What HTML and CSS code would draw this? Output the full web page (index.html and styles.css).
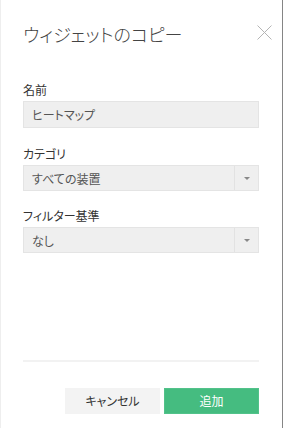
FILE: index.html
```html
<!DOCTYPE html>
<html lang="ja">
<head>
	<meta charset="UTF-8">
	<title>ウィジェットのコピー</title>
	<link rel="stylesheet" href="styles.css">
</head>
<body>
<div class="dialog">
	<div class="head">
		<div class="title">ウィジェットのコピー</div>
		<div class="close">
			<svg width="15" height="15" viewBox="0 0 15 15"><path d="M0.5 0.5 L14.5 14.5 M14.5 0.5 L0.5 14.5" stroke="#b4b4b4" stroke-width="1" fill="none"/></svg>
		</div>
	</div>

	<div class="form">
		<div class="field">
			<div class="label">名前</div>
			<div class="input">ヒートマップ</div>
		</div>
		<div class="field">
			<div class="label">カテゴリ</div>
			<div class="select">
				<span class="val">すべての装置</span>
				<span class="arrow"></span>
			</div>
		</div>
		<div class="field">
			<div class="label">フィルター基準</div>
			<div class="select">
				<span class="val">なし</span>
				<span class="arrow"></span>
			</div>
		</div>
	</div>

	<div class="line"></div>

	<div class="btns">
		<div class="btn cancel">キャンセル</div>
		<div class="btn add">追加</div>
	</div>
</div>
</body>
</html>
```

FILE: styles.css
```css
html,body{
	margin: 0;
	padding: 0;
	background-color: #fff;
	font-family: "Noto Sans CJK JP", "Noto Sans", sans-serif;
	font-feature-settings: "palt";
}
.dialog{
	box-sizing: border-box;
	width: 283px;
	height: 428px;
	padding: 22px 23px 0 22px;
	border-left: 1px solid #eee;
	border-right: 1px solid #858585;
	display: flex;
	flex-direction: column;
}
.head{
	display: flex;
	justify-content: space-between;
	align-items: flex-start;
}
.title{
	font-size: 18px;
	line-height: 24px;
	font-weight: 300;
	color: #444;
}
.close{
	width: 15px;
	height: 15px;
	margin-top: 3px;
	margin-right: -13px;
}
.close svg{display: block;}
.form{
	margin-top: 36px;
	display: flex;
	flex-direction: column;
}
.field{margin-bottom: 17px;}
.field:first-child{margin-bottom: 18px;}
.label{
	font-size: 12px;
	line-height: 16px;
	color: #333;
	margin-bottom: 3px;
}
.input, .select{
	box-sizing: border-box;
	height: 27px;
	background-color: #efefef;
	border: 1px solid #e4e4e4;
	font-size: 12px;
	color: #555;
	display: flex;
	align-items: center;
}
.input{padding-left: 8px;}
.select{height: 26px;}
.select .val{
	flex: 1;
	padding-left: 8px;
}
.select .arrow{
	width: 23px;
	height: 100%;
	border-left: 1px solid #e2e2e2;
	display: flex;
	align-items: center;
	justify-content: center;
}
.select .arrow:after{
	content: "";
	border-left: 3px solid transparent;
	border-right: 3px solid transparent;
	border-top: 3px solid #888;
}
.line{
	margin-top: auto;
	height: 2px;
	background-color: #f2f2f2;
	margin-bottom: 26px;
}
.btns{
	display: flex;
	justify-content: flex-end;
	gap: 4px;
	margin-bottom: 14px;
}
.btn{
	height: 26px;
	line-height: 26px;
	font-size: 12px;
	text-align: center;
}
.cancel{
	width: 95px;
	background-color: #f3f3f3;
	color: #333;
}
.add{
	width: 95px;
	background-color: #45bc80;
	color: #fff;
	border: 1px solid #52c28a;
	box-sizing: border-box;
	line-height: 24px;
}
```
